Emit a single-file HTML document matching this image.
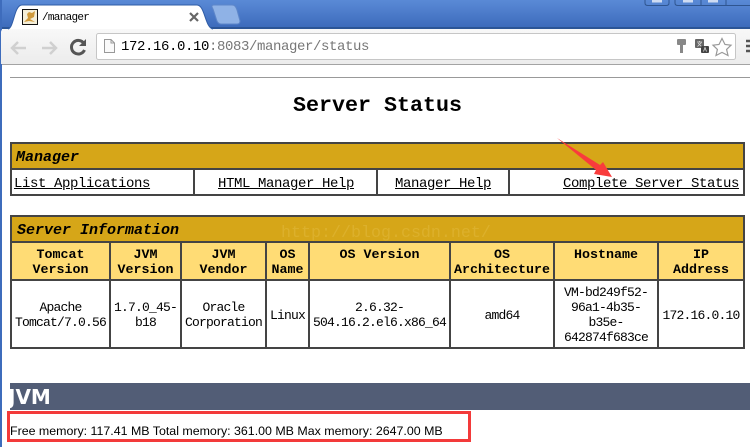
<!DOCTYPE html>
<html><head><meta charset="utf-8">
<style>
html,body{margin:0;padding:0;background:#fff}
body{width:750px;height:447px;position:relative;overflow:hidden;font-family:"Liberation Mono",monospace;color:#000}
div,a,span{position:absolute;box-sizing:border-box}
svg{position:absolute;left:0;top:0}
.c{text-align:center;font-size:13px;letter-spacing:-.8px;line-height:15px;white-space:nowrap;padding-top:2px;display:flex;align-items:center;justify-content:center}
.h{font-size:13.33px;letter-spacing:0;font-weight:bold;background:#FFDC75;padding-top:5px;align-items:flex-start}
.t{position:absolute;font-size:14px;letter-spacing:-.4px;line-height:15px;white-space:nowrap}
u{text-decoration:underline}
.cap{font-weight:bold;font-style:italic;font-size:15px;line-height:16px;white-space:nowrap}
</style></head><body>
<!-- chrome -->
<div style="left:0;top:0;width:750px;height:29px;background:linear-gradient(#5a8ad6,#3b69ba)"></div>
<div style="left:0;top:27px;width:750px;height:2px;background:#2c5596"></div>
<div style="left:0;top:0;width:2px;height:447px;background:#3e6cbc"></div>
<div style="left:1px;top:29px;width:749px;height:35px;background:linear-gradient(#f8f8f8,#ececec);border-radius:3px 0 0 0"></div>
<div style="left:2px;top:64px;width:748px;height:1px;background:#a3a3a3"></div>
<svg width="750" height="70" viewBox="0 0 750 70">
<path d="M8 29C14 28 14 5 22 5H197C205 5 205 28 213 29Z" fill="#fff"/>
<path d="M8 29C14 28 14 5 22 5H197C205 5 205 28 213 29" fill="none" stroke="#2f5ca6" stroke-width="1"/>
<path d="M213 9C211 6 212 5 214 5H232C235 5 236 7 237 10L240 21C240 23 239 24 237 24H221C219 24 218 23 217 21Z" fill="#8fb2e6" stroke="#5d86c9" stroke-width="1"/>
<rect x="22.500" y="9.500" width="15" height="15" fill="#f4eed8" stroke="#111"/>
<path d="M24 22L28 18L27 14L29 12L32 13L35 11L34 17L30 19L35 22L29 21Z" fill="#d09a3c"/>
<path d="M190 13L198 21M198 13L190 21" stroke="#666" stroke-width="2.200"/>
<path d="M26 48H12M18 42L12 48L18 54" fill="none" stroke="#d0d0d0" stroke-width="2.500"/>
<path d="M42 48H56M50 42L56 48L50 54" fill="none" stroke="#d0d0d0" stroke-width="2.500"/>
<path d="M84 43.500A6.800 6.800 0 1 0 84.500 50" fill="none" stroke="#555" stroke-width="3"/>
<path d="M79 46H86V39Z" fill="#555"/>
<rect x="96.500" y="33.500" width="639" height="26" rx="2" fill="#fff" stroke="#c6c6c6"/>
<path d="M104.500 39.500H111L114.500 43V52.500H104.500Z" fill="#fafafa" stroke="#999"/>
<path d="M111 39.500V43H114.500" fill="none" stroke="#999"/>
<rect x="677" y="39" width="9" height="6" rx="1" fill="#888"/><rect x="680" y="44" width="3" height="9" fill="#888"/>
<rect x="695" y="39" width="9" height="9" rx="1" fill="#666"/><path d="M697 42h5M699.500 41v1.500M697.500 46.500L701.500 42.500M698 43L701.500 46.500" stroke="#ddd" stroke-width=".8" fill="none"/>
<rect x="701" y="46" width="8" height="7" rx="1" fill="#444"/><path d="M703.500 51.500L705 47.500L706.500 51.500" stroke="#ddd" stroke-width=".8" fill="none"/>
<path d="M722 38.500L725 44.500L731 45.200L726.600 49.400L728 55.500L722 52.400L716 55.500L717.400 49.400L713 45.200L719 44.500Z" fill="#fff" stroke="#999" stroke-width="1.200"/>
<path d="M746 41h4M746 46h4M746 51h4" stroke="#555" stroke-width="2.400"/>
<path d="M645 0V3Q645 5.500 648 5.500H666Q669 5.500 669 3V0M675 0V3Q675 5.500 678 5.500H750M701 0V5M726 0V5" fill="none" stroke="#2f5590" stroke-width="1"/>
<rect x="652" y="0" width="10" height="2.500" fill="#cfdcf2"/><rect x="683" y="0" width="10" height="2.500" fill="#cfdcf2"/><rect x="708" y="0" width="10" height="2.500" fill="#cfdcf2"/>
</svg>
<div class="t" style="left:42px;top:11px;font-size:11px;letter-spacing:-.7px;line-height:14px">/manager</div>
<div class="t" style="left:121px;top:39px;font-size:14px;letter-spacing:-.4px;line-height:17px;color:#777"><span style="position:static;color:#000">172.16.0.10</span>:8083/manager/status</div>

<!-- page -->
<div style="left:10px;top:77px;width:740px;height:1px;background:#999"></div>
<div class="t" style="left:293px;top:93px;font-size:21.67px;letter-spacing:0;line-height:26px;font-weight:bold">Server Status</div>

<!-- table 1 -->
<div style="left:10px;top:142px;width:735px;height:54px;background:#444"></div>
<div style="left:12px;top:144px;width:731px;height:24px;background:#D6A618"></div>
<div style="left:12px;top:170px;width:181px;height:24px;background:#fff"></div>
<div style="left:195px;top:170px;width:181px;height:24px;background:#fff"></div>
<div style="left:378px;top:170px;width:130px;height:24px;background:#fff"></div>
<div style="left:510px;top:170px;width:233px;height:24px;background:#fff"></div>
<div class="cap" style="left:16px;top:150px">Manager</div>
<div class="t" style="left:14px;top:177px"><u>List Applications</u></div>
<div class="t" style="left:218px;top:177px"><u>HTML Manager Help</u></div>
<div class="t" style="left:395px;top:177px"><u>Manager Help</u></div>
<div class="t" style="left:563px;top:177px"><u>Complete Server Status</u></div>

<!-- table 2 -->
<div style="left:10px;top:215px;width:735px;height:134px;background:#444"></div>
<div style="left:12px;top:217px;width:731px;height:24px;background:#D6A618"></div>
<div class="cap" style="left:17px;top:223px">Server Information</div>
<div class="t" style="left:281px;top:224px;font-size:16.67px;letter-spacing:0;line-height:20px;color:#dcb02c">http://blog.csdn.net/</div>

<div class="c h" style="left:12px;top:243px;width:97px;height:36px">Tomcat<br>Version</div>
<div class="c h" style="left:111px;top:243px;width:69px;height:36px">JVM<br>Version</div>
<div class="c h" style="left:182px;top:243px;width:83px;height:36px">JVM<br>Vendor</div>
<div class="c h" style="left:267px;top:243px;width:41px;height:36px">OS<br>Name</div>
<div class="c h" style="left:310px;top:243px;width:139px;height:36px">OS Version</div>
<div class="c h" style="left:451px;top:243px;width:102px;height:36px">OS<br>Architecture</div>
<div class="c h" style="left:555px;top:243px;width:102px;height:36px">Hostname</div>
<div class="c h" style="left:659px;top:243px;width:84px;height:36px">IP<br>Address</div>

<div class="c" style="left:12px;top:281px;width:97px;height:66px;background:#fff">Apache<br>Tomcat/7.0.56</div>
<div class="c" style="left:111px;top:281px;width:69px;height:66px;background:#fff">1.7.0_45-<br>b18</div>
<div class="c" style="left:182px;top:281px;width:83px;height:66px;background:#fff">Oracle<br>Corporation</div>
<div class="c" style="left:267px;top:281px;width:41px;height:66px;background:#fff">Linux</div>
<div class="c" style="left:310px;top:281px;width:139px;height:66px;background:#fff">2.6.32-<br>504.16.2.el6.x86_64</div>
<div class="c" style="left:451px;top:281px;width:102px;height:66px;background:#fff">amd64</div>
<div class="c" style="left:555px;top:281px;width:102px;height:66px;background:#fff">VM-bd249f52-<br>96a1-4b35-<br>b35e-<br>642874f683ce</div>
<div class="c" style="left:659px;top:281px;width:84px;height:66px;background:#fff">172.16.0.10</div>

<!-- JVM -->
<div style="left:10px;top:383px;width:740px;height:27px;background:#525D76"></div>
<div class="t" style="left:8px;top:385px;font-family:'DejaVu Sans',sans-serif;font-weight:bold;font-size:20px;letter-spacing:0;line-height:24px;color:#fff">JVM</div>
<div style="left:7px;top:411px;width:464px;height:31px;border:3px solid #f33a3a"></div>
<div class="t" style="left:10px;top:424px;font-family:'Liberation Sans',sans-serif;font-size:12.4px;letter-spacing:0;line-height:14px">Free memory: 117.41 MB Total memory: 361.00 MB Max memory: 2647.00 MB</div>

<!-- arrow -->
<svg width="750" height="447" viewBox="0 0 750 447">
<path d="M557 138L600 165L603 162L612 177L594 174L596 170Z" fill="#f93c3c"/>
</svg>
</body></html>
